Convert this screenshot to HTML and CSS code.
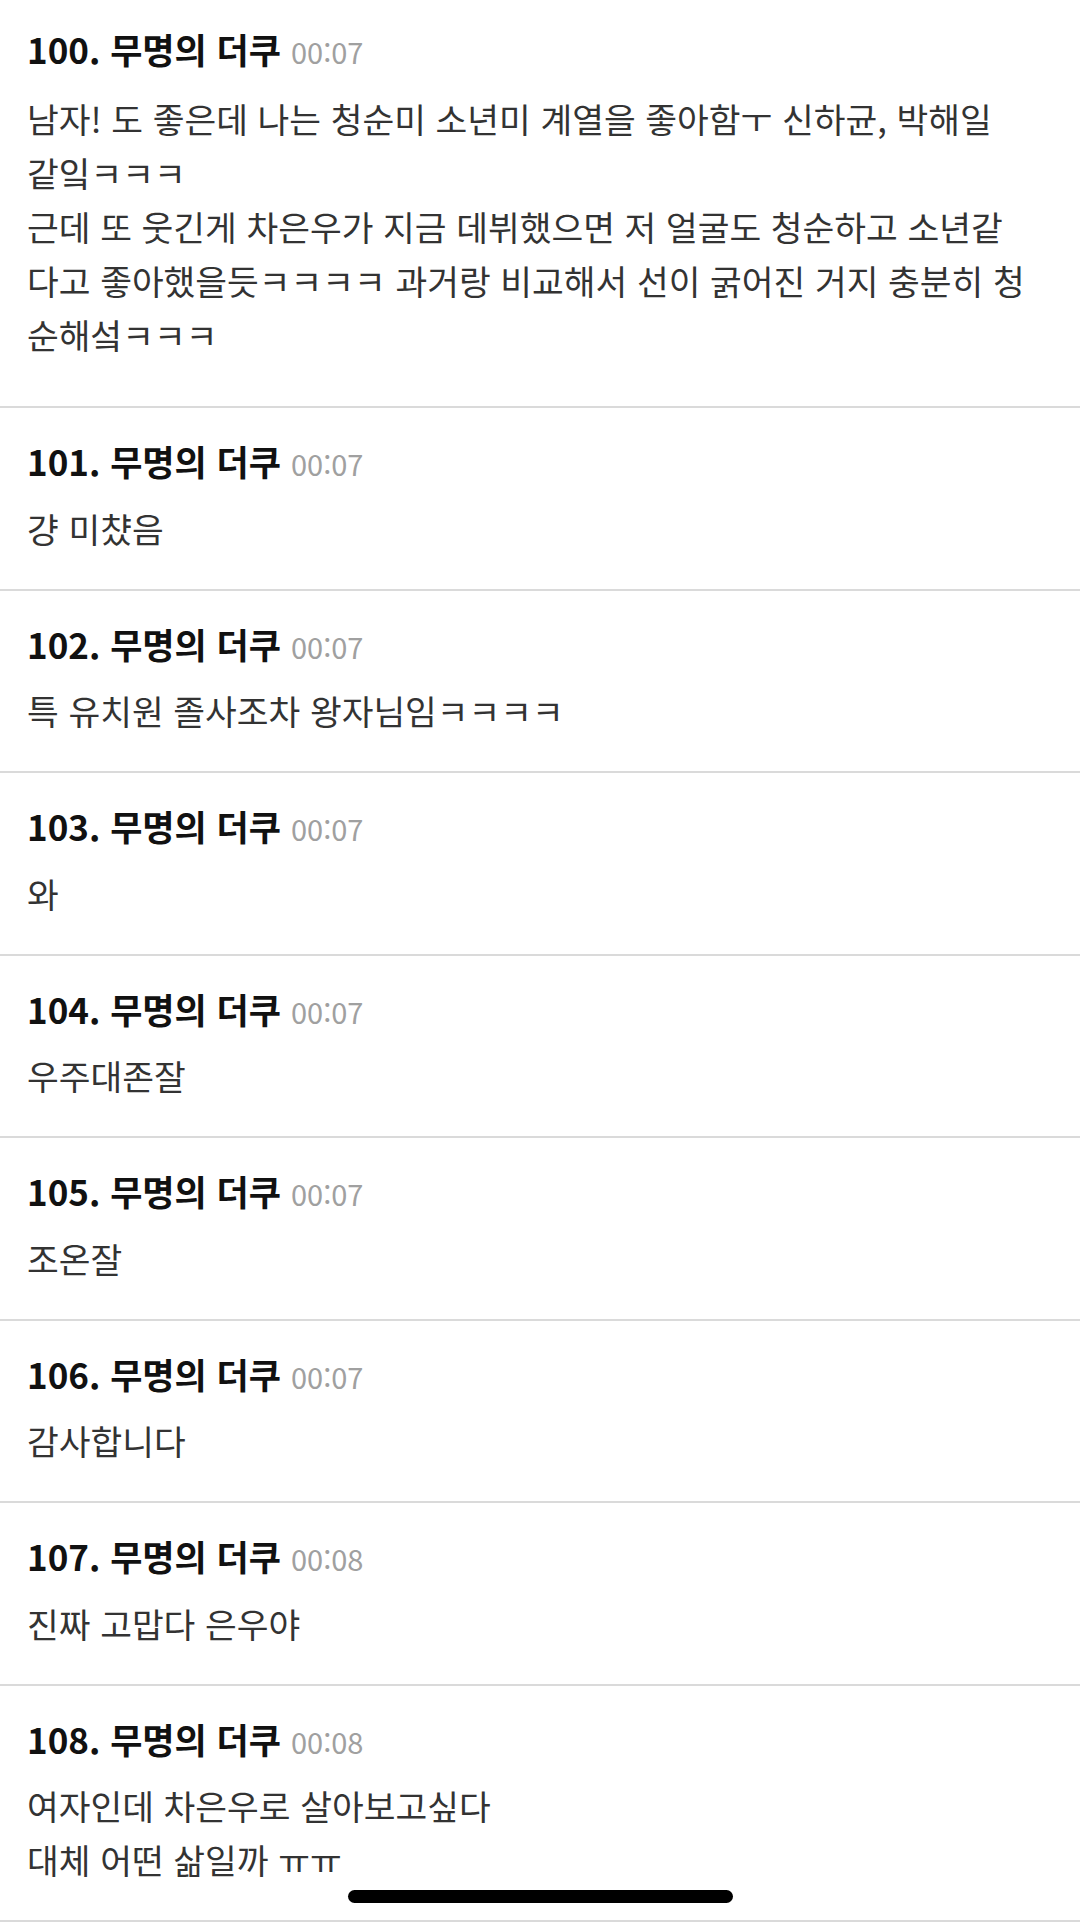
FILE: index.html
```html
<!DOCTYPE html>
<html lang="ko">
<head>
  <meta charset="UTF-8">
  <meta name="viewport" content="width=device-width, initial-scale=1.0">
  <title>댓글</title>
  <link rel="stylesheet" href="styles.css">
</head>
<body>

  <div class="comment-list">
    <!-- first comment is cut off at the top of the screen -->
    <div class="comment first">
      <div class="comment-head">100. 무명의 더쿠<span class="time">00:07</span></div>
      <div class="comment-body">남자! 도 좋은데 나는 청순미 소년미 계열을 좋아함ㅜ 신하균, 박해일<br>같잌ㅋㅋㅋ<br>근데 또 웃긴게 차은우가 지금 데뷔했으면 저 얼굴도 청순하고 소년같<br>다고 좋아했을듯ㅋㅋㅋㅋ 과거랑 비교해서 선이 굵어진 거지 충분히 청<br>순해섴ㅋㅋㅋ</div>
    </div>

    <div class="comment">
      <div class="comment-head">101. 무명의 더쿠<span class="time">00:07</span></div>
      <div class="comment-body">걍 미챴음</div>
    </div>

    <div class="comment">
      <div class="comment-head">102. 무명의 더쿠<span class="time">00:07</span></div>
      <div class="comment-body">특 유치원 졸사조차 왕자님임ㅋㅋㅋㅋ</div>
    </div>

    <div class="comment">
      <div class="comment-head">103. 무명의 더쿠<span class="time">00:07</span></div>
      <div class="comment-body">와</div>
    </div>

    <div class="comment">
      <div class="comment-head">104. 무명의 더쿠<span class="time">00:07</span></div>
      <div class="comment-body">우주대존잘</div>
    </div>

    <div class="comment">
      <div class="comment-head">105. 무명의 더쿠<span class="time">00:07</span></div>
      <div class="comment-body">조온잘</div>
    </div>

    <div class="comment">
      <div class="comment-head">106. 무명의 더쿠<span class="time">00:07</span></div>
      <div class="comment-body">감사합니다</div>
    </div>

    <div class="comment">
      <div class="comment-head">107. 무명의 더쿠<span class="time">00:08</span></div>
      <div class="comment-body">진짜 고맙다 은우야</div>
    </div>

    <div class="comment">
      <div class="comment-head">108. 무명의 더쿠<span class="time">00:08</span></div>
      <div class="comment-body">여자인데 차은우로 살아보고싶다<br>대체 어떤 삶일까 ㅠㅠ</div>
    </div>
  </div>

  <!-- iOS home indicator -->
  <div class="home-bar"></div>

</body>
</html>
```

FILE: styles.css
```css
body {
  margin: 0;
  background-color: #fff;
  font-family: "Noto Sans CJK KR", "Noto Sans", sans-serif;
  height: 1926px;
  overflow: hidden;
  position: relative;
}

.comment-list {
  display: flex;
  flex-direction: column;
}

.comment {
  padding: 31px 20px 34px 27px;
  border-bottom: 2px solid #dadada;
}

.comment.first {
  padding-top: 27px;
  padding-bottom: 45px;
}

.comment-head {
  font-size: 35px;
  line-height: 44px;
  font-weight: 700;
  color: #111;
  margin-bottom: 17.5px;
}

.first .comment-head {
  margin-bottom: 20px;
}

.time {
  font-size: 29px;
  line-height: 1;
  font-weight: 400;
  color: #a0a0a0;
  margin-left: 10px;
}

.comment-body {
  font-size: 34.5px;
  line-height: 54px;
  color: #333;
  white-space: nowrap;
}

.home-bar {
  position: absolute;
  left: 348px;
  bottom: 23px;
  width: 385px;
  height: 13px;
  border-radius: 7px;
  background-color: #000;
}
```
